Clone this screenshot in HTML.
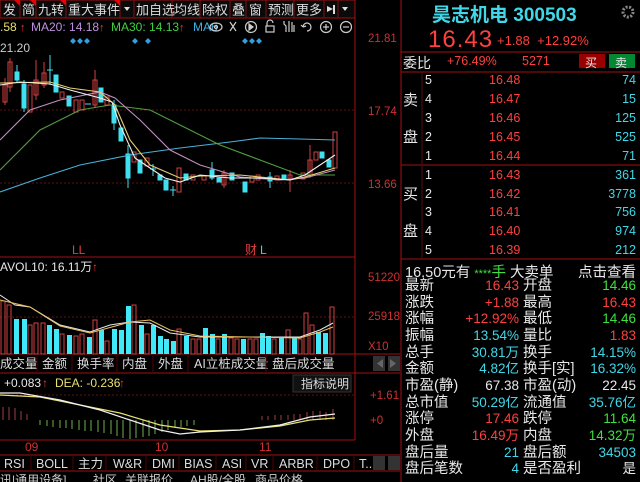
<!DOCTYPE html>
<html><head><meta charset="utf-8"><style>
body{margin:0;width:640px;height:482px;background:#000;overflow:hidden;font-family:"Liberation Sans","Noto Sans CJK SC",sans-serif;position:relative;color:#ddd}
.a{position:absolute;white-space:nowrap}
.r{color:#ff4040}.c{color:#40d8e8}.g{color:#40e040}.w{color:#e8e8e8}.y{color:#e8e070}
.rp div{position:absolute;white-space:nowrap;font-size:12.5px}
</style></head><body>
<svg width="640" height="482" style="position:absolute;left:0;top:0" font-family="Liberation Sans, Noto Sans CJK SC, sans-serif">
<rect x="0" y="0" width="355" height="18" fill="#0a0a0a" stroke="#a01010"/>
<g stroke="#801010"><line x1="20" y1="0" x2="20" y2="18"/><line x1="36" y1="0" x2="36" y2="18"/><line x1="66" y1="0" x2="66" y2="18"/><line x1="120" y1="0" x2="120" y2="18"/><line x1="134" y1="0" x2="134" y2="18"/><line x1="172" y1="0" x2="172" y2="18"/><line x1="200" y1="0" x2="200" y2="18"/><line x1="230" y1="0" x2="230" y2="18"/><line x1="246" y1="0" x2="246" y2="18"/><line x1="266" y1="0" x2="266" y2="18"/><line x1="294" y1="0" x2="294" y2="18"/><line x1="324" y1="0" x2="324" y2="18"/><line x1="338" y1="0" x2="338" y2="18"/></g>
<g fill="#e00"><path d="M14 0h6v6z"/><path d="M30 0h6v6z"/><path d="M60 0h6v6z"/><path d="M114 0h6v6z"/></g>
<path d="M124 7h6l-3 4z M342 7h6l-3 4z" fill="#ddd"/>
<path d="M327 6l6 3l-6 3z" fill="#ddd"/><rect x="333" y="5" width="2" height="9" fill="#ddd"/>
<g font-size="13" fill="#ddd"><text x="3" y="14.5">发</text><text x="22" y="14.5">简</text><text x="38" y="14.5">九转</text><text x="68" y="14.5">重大事件</text><text x="136" y="14.5">加自选</text><text x="174" y="14.5">均线</text><text x="202" y="14.5">除权</text><text x="232" y="14.5">叠</text><text x="249" y="14.5">窗</text><text x="268" y="14.5">预测</text><text x="296" y="14.5">更多</text></g>
<g font-size="12"><text x="0" y="31" fill="#e8e070">.58</text><text x="31" y="31" fill="#c090e0">MA20: 14.18</text><text x="111" y="31" fill="#40d040">MA30: 14.13</text><text x="193" y="31" fill="#40b0e0">MA6</text></g>
<g fill="#ff3030" font-size="11"><text x="20" y="31">↑</text><text x="99" y="31">↑</text><text x="179" y="31">↑</text></g>
<g stroke="#ccc" fill="none" stroke-width="1.2"><ellipse cx="216" cy="27" rx="6" ry="4"/><circle cx="216" cy="27" r="1.5"/><path d="M230 22l6 9M236 22l-6 9"/><circle cx="251" cy="27" r="5.5"/><path d="M249 24l4 3l-4 3z" fill="#ccc"/><rect x="266" y="26" width="8" height="6"/><path d="M267 26v-3a3 3 0 0 1 6 0"/><path d="M286 32v-6l-2-2v-3M289 32v-11M292 32v-10M294 32v-7"/><path d="M303 27a4 4 0 1 1 4 4M303 27l-2-2M303 27l3-1"/><circle cx="326" cy="27" r="5.5"/><path d="M323 27h6M326 24v6"/><circle cx="346" cy="27" r="5.5"/><path d="M343 27h6"/></g>
<g fill="#30a0e0"><path d="M70 41l3-3l3 3l-3 3z M77 41l3-3l3 3l-3 3z M84 41l3-3l3 3l-3 3z M132 41l3-3l3 3l-3 3z M145 41l3-3l3 3l-3 3z M242 41l3-3l3 3l-3 3z M249 41l3-3l3 3l-3 3z M256 41l3-3l3 3l-3 3z"/></g>
<text x="0" y="52" font-size="12" fill="#ccc">21.20</text>
<g stroke="#601010" stroke-dasharray="2,2"><line x1="0" y1="110" x2="355" y2="110"/><line x1="0" y1="183" x2="355" y2="183"/><line x1="0" y1="317" x2="355" y2="317"/><line x1="0" y1="395" x2="355" y2="395"/></g>
<line x1="355" y1="18" x2="355" y2="440" stroke="#a01010"/>
<line x1="0" y1="257" x2="355" y2="257" stroke="#a01010"/>
<line x1="0" y1="354" x2="400" y2="354" stroke="#a01010"/>
<line x1="0" y1="373" x2="400" y2="373" stroke="#a01010"/>
<line x1="0" y1="440" x2="355" y2="440" stroke="#a01010"/>
<line x1="0" y1="455" x2="400" y2="455" stroke="#a01010"/>
<line x1="0" y1="471" x2="400" y2="471" stroke="#a01010"/>
<g font-size="11.5" fill="#d03030"><text x="368" y="42">21.81</text><text x="368" y="115">17.74</text><text x="368" y="188">13.66</text><text x="368" y="281">51220</text><text x="368" y="320">25918</text><text x="368" y="350">X10</text><text x="370" y="399">+1.61</text><text x="370" y="424">+0</text></g>
<g transform="translate(0,40)" stroke-width="1">
<g stroke="#d04040" fill="none">
<line x1="5" y1="38" x2="5" y2="65"/><rect x="3" y="45" width="4" height="17"/>
<line x1="10" y1="18" x2="10" y2="52"/><rect x="8" y="22" width="4" height="25"/>
<rect x="28" y="45" width="4" height="27"/><rect x="34" y="40" width="4" height="15"/><line x1="36" y1="20" x2="36" y2="60"/>
<rect x="42" y="33" width="4" height="12"/><line x1="44" y1="22" x2="44" y2="48"/>
<rect x="60" y="52" width="4" height="6"/><rect x="74" y="60" width="4" height="12"/><rect x="80" y="60" width="4" height="10"/>
<rect x="93" y="40" width="4" height="25"/><line x1="95" y1="30" x2="95" y2="68"/><rect x="105" y="57" width="4" height="8"/>
<rect x="132" y="112" width="4" height="10"/><rect x="145" y="118" width="4" height="8"/><rect x="177" y="128" width="4" height="24"/>
<rect x="191" y="135" width="4" height="5"/><rect x="202" y="136" width="4" height="4"/><rect x="222" y="133" width="4" height="12"/><line x1="224" y1="130" x2="224" y2="148"/><rect x="250" y="136" width="4" height="6"/><rect x="256" y="135" width="4" height="5"/><rect x="275" y="136" width="4" height="4"/><line x1="290" y1="130" x2="290" y2="152"/><rect x="288" y="135" width="4" height="4"/><rect x="301" y="133" width="4" height="6"/>
<rect x="308" y="120" width="4" height="15"/><line x1="310" y1="105" x2="310" y2="138"/><rect x="314" y="112" width="4" height="8"/><rect x="333" y="92" width="4" height="36"/>
</g>
<g fill="#40e0f0" stroke="#40e0f0">
<rect x="15" y="32" width="4" height="8"/><line x1="17" y1="25" x2="17" y2="42"/><rect x="22" y="44" width="4" height="24"/><line x1="24" y1="40" x2="24" y2="72"/>
<line x1="47" y1="30" x2="53" y2="30"/><line x1="50" y1="15" x2="50" y2="45"/>
<rect x="54" y="35" width="4" height="17"/><rect x="67" y="56" width="4" height="10"/><line x1="85" y1="64" x2="91" y2="64"/>
<rect x="99" y="48" width="4" height="14"/><rect x="112" y="65" width="4" height="18"/><line x1="114" y1="60" x2="114" y2="90"/>
<rect x="119" y="88" width="4" height="13"/><rect x="126" y="114" width="4" height="24"/><line x1="128" y1="105" x2="128" y2="148"/>
<rect x="138" y="120" width="4" height="13"/><line x1="150" y1="129" x2="156" y2="129"/><line x1="153" y1="124" x2="153" y2="136"/>
<rect x="158" y="135" width="4" height="5"/><rect x="164" y="140" width="4" height="10"/><line x1="170" y1="150" x2="176" y2="150"/><line x1="173" y1="146" x2="173" y2="156"/>
<rect x="184" y="134" width="4" height="6"/><rect x="210" y="130" width="4" height="8"/><line x1="212" y1="122" x2="212" y2="140"/><rect x="217" y="138" width="4" height="4"/><rect x="230" y="133" width="4" height="7"/><rect x="243" y="142" width="4" height="10"/><rect x="268" y="137" width="4" height="4"/><line x1="270" y1="132" x2="270" y2="148"/><rect x="282" y="135" width="4" height="4"/><rect x="320" y="112" width="4" height="6"/><rect x="327" y="120" width="4" height="7"/>
</g>
<g fill="none" stroke-width="1.1">
<polyline stroke="#4ab0d8" points="0,152 40,138 80,125 130,115 180,108 230,102 260,98 300,99 335,100"/>
<polyline stroke="#50a040" points="0,130 40,90 80,70 110,65 150,70 180,85 220,105 260,120 300,135 335,135"/>
<polyline stroke="#c090c0" points="0,100 30,70 60,60 100,52 115,58 140,80 170,110 200,125 240,137 280,140 305,138 335,130"/>
<polyline stroke="#e8d070" points="0,43 50,42 70,48 100,52 115,65 130,100 150,125 180,138 200,136 240,135 290,140 305,137 335,128"/>
<polyline stroke="#f0f0f0" points="0,45 20,42 50,44 70,50 100,58 112,62 120,85 135,118 150,128 165,138 180,142 200,135 230,138 260,138 290,140 305,135 320,125 335,115"/>
</g></g>
<text x="72" y="254" font-size="12" fill="#e04040">LL</text><text x="245" y="254" font-size="12" fill="#e04040">财</text><text x="260" y="254" font-size="12" fill="#40d0e0">L</text>
<text x="0" y="271" font-size="12" fill="#e8e8e8">AVOL10: 16.11万</text><text x="92" y="271" font-size="12" fill="#ff3030">↑</text>
<g fill="none" stroke="#d04040">
<rect x="1" y="301" width="4" height="53"/><rect x="7" y="305" width="4" height="49"/><rect x="28" y="325" width="4" height="29"/><rect x="34" y="323" width="4" height="31"/><rect x="41" y="323" width="4" height="31"/><rect x="60" y="334" width="4" height="20"/><rect x="74" y="336" width="4" height="18"/><rect x="80" y="334" width="4" height="20"/><rect x="93" y="320" width="4" height="34"/><rect x="105" y="341" width="4" height="13"/><rect x="132" y="305" width="4" height="49"/><rect x="145" y="334" width="4" height="20"/><rect x="177" y="329" width="4" height="25"/><rect x="191" y="339" width="4" height="15"/><rect x="197" y="339" width="4" height="15"/><rect x="216" y="339" width="4" height="15"/><rect x="229" y="338" width="4" height="16"/><rect x="235" y="339" width="4" height="15"/><rect x="248" y="339" width="4" height="15"/><rect x="254" y="339" width="4" height="15"/><rect x="272" y="339" width="4" height="15"/><rect x="286" y="330" width="4" height="24"/><rect x="298" y="339" width="4" height="15"/><rect x="304" y="313" width="4" height="41"/><rect x="310" y="325" width="4" height="29"/><rect x="330" y="307" width="4" height="47"/>
</g>
<g fill="#40e8f8">
<rect x="14" y="319" width="5" height="35"/><rect x="22" y="319" width="5" height="35"/><rect x="47" y="325" width="5" height="29"/><rect x="54" y="329" width="5" height="25"/><rect x="67" y="335" width="5" height="19"/><rect x="87" y="337" width="5" height="17"/><rect x="99" y="330" width="5" height="24"/><rect x="112" y="329" width="5" height="25"/><rect x="119" y="330" width="5" height="24"/><rect x="126" y="306" width="5" height="48"/><rect x="139" y="325" width="5" height="29"/><rect x="151" y="325" width="5" height="29"/><rect x="158" y="336" width="5" height="18"/><rect x="164" y="339" width="5" height="15"/><rect x="171" y="341" width="5" height="13"/><rect x="184" y="336" width="5" height="18"/><rect x="203" y="328" width="5" height="26"/><rect x="210" y="334" width="5" height="20"/><rect x="222" y="334" width="5" height="20"/><rect x="241" y="339" width="5" height="15"/><rect x="260" y="333" width="5" height="21"/><rect x="266" y="336" width="5" height="18"/><rect x="279" y="338" width="5" height="16"/><rect x="292" y="337" width="5" height="17"/><rect x="316" y="332" width="5" height="22"/><rect x="323" y="333" width="5" height="21"/>
</g>
<g fill="none"><polyline stroke="#e8e8e8" points="0,295 15,305 30,307 60,325 90,332 110,325 130,322 150,323 170,333 200,337 300,337 320,330 333,323"/><polyline stroke="#e8c060" points="0,300 30,307 60,326 90,333 130,322 150,320 170,330 200,336 300,338 320,332 333,327"/></g>
<g font-size="12.5" fill="#ddd"><text x="0" y="368">成交量</text><text x="42" y="368">金额</text><text x="77" y="368">换手率</text><text x="122" y="368">内盘</text><text x="158" y="368">外盘</text><text x="194" y="368">AI立桩成交量</text><text x="272" y="368">盘后成交量</text></g>
<g stroke="#500" ><line x1="37" y1="356" x2="37" y2="372"/><line x1="72" y1="356" x2="72" y2="372"/><line x1="117" y1="356" x2="117" y2="372"/><line x1="153" y1="356" x2="153" y2="372"/><line x1="188" y1="356" x2="188" y2="372"/><line x1="266" y1="356" x2="266" y2="372"/></g>
<rect x="373" y="356" width="12" height="15" fill="#333"/><rect x="388" y="356" width="12" height="15" fill="#333"/>
<path d="M383 359l-6 4.5l6 4.5z M390 359l6 4.5l-6 4.5z" fill="#666"/>
<text x="4" y="387" font-size="12" fill="#e8e8e8">+0.083</text><text x="42" y="387" font-size="12" fill="#ff3030">↑</text><text x="55" y="387" font-size="12" fill="#e8e070">DEA: -0.236</text><text x="119" y="387" font-size="12" fill="#ff3030">↑</text>
<rect x="293" y="375" width="58" height="17" fill="#111" stroke="#333"/><text x="301" y="388" font-size="12" fill="#ddd">指标说明</text>
<g stroke="#a04040"><line x1="3" y1="420" x2="3" y2="407"/><line x1="9" y1="420" x2="9" y2="407"/><line x1="15" y1="420" x2="15" y2="408"/><line x1="21" y1="420" x2="21" y2="411"/><line x1="27" y1="420" x2="27" y2="414"/><line x1="262" y1="420" x2="262" y2="416"/><line x1="268" y1="420" x2="268" y2="416"/><line x1="275" y1="420" x2="275" y2="415"/><line x1="281" y1="420" x2="281" y2="415"/><line x1="288" y1="420" x2="288" y2="415"/><line x1="294" y1="420" x2="294" y2="414"/><line x1="300" y1="420" x2="300" y2="414"/><line x1="307" y1="420" x2="307" y2="412"/><line x1="313" y1="420" x2="313" y2="411"/><line x1="320" y1="420" x2="320" y2="411"/><line x1="326" y1="420" x2="326" y2="412"/><line x1="333" y1="420" x2="333" y2="409"/></g>
<g stroke="#70b050"><line x1="40" y1="420" x2="40" y2="425"/><line x1="47" y1="420" x2="47" y2="426"/><line x1="53" y1="420" x2="53" y2="427"/><line x1="60" y1="420" x2="60" y2="428"/><line x1="66" y1="420" x2="66" y2="428"/><line x1="72" y1="420" x2="72" y2="429"/><line x1="79" y1="420" x2="79" y2="430"/><line x1="85" y1="420" x2="85" y2="431"/><line x1="91" y1="420" x2="91" y2="431"/><line x1="98" y1="420" x2="98" y2="432"/><line x1="104" y1="420" x2="104" y2="433"/><line x1="111" y1="420" x2="111" y2="434"/><line x1="117" y1="420" x2="117" y2="436"/><line x1="123" y1="420" x2="123" y2="438"/><line x1="130" y1="420" x2="130" y2="439"/><line x1="136" y1="420" x2="136" y2="438"/><line x1="143" y1="420" x2="143" y2="437"/><line x1="149" y1="420" x2="149" y2="436"/><line x1="155" y1="420" x2="155" y2="434"/><line x1="162" y1="420" x2="162" y2="432"/><line x1="168" y1="420" x2="168" y2="430"/><line x1="175" y1="420" x2="175" y2="428"/><line x1="181" y1="420" x2="181" y2="427"/><line x1="187" y1="420" x2="187" y2="426"/><line x1="194" y1="420" x2="194" y2="425"/></g>
<g fill="none" stroke-width="1.2"><polyline stroke="#e8e070" points="0,395 40,397 80,405 120,413 160,425 200,431 240,430 280,426 310,420 335,418"/><polyline stroke="#f0f0f0" points="0,393 20,393 60,400 100,410 130,420 160,430 180,434 200,432 240,430 280,425 310,417 335,414"/></g>
<g font-size="12" fill="#d03030"><text x="25" y="451">09</text><text x="155" y="451">10</text><text x="259" y="451">11</text></g>
<g font-size="12.5" fill="#ddd"><text x="4" y="468">RSI</text><text x="36" y="468">BOLL</text><text x="78" y="468">主力</text><text x="113" y="468">W&amp;R</text><text x="152" y="468">DMI</text><text x="184" y="468">BIAS</text><text x="222" y="468">ASI</text><text x="251" y="468">VR</text><text x="279" y="468">ARBR</text><text x="323" y="468">DPO</text><text x="359" y="468">T..</text></g>
<g stroke="#500"><line x1="31" y1="456" x2="31" y2="470"/><line x1="73" y1="456" x2="73" y2="470"/><line x1="106" y1="456" x2="106" y2="470"/><line x1="146" y1="456" x2="146" y2="470"/><line x1="179" y1="456" x2="179" y2="470"/><line x1="216" y1="456" x2="216" y2="470"/><line x1="246" y1="456" x2="246" y2="470"/><line x1="273" y1="456" x2="273" y2="470"/><line x1="317" y1="456" x2="317" y2="470"/><line x1="354" y1="456" x2="354" y2="470"/></g>
<rect x="373" y="456" width="12" height="14" fill="#333"/><rect x="388" y="456" width="12" height="14" fill="#333"/>
<g font-size="12" fill="#ccc"><text x="0" y="484">讯|通用设备]</text><text x="93" y="484">社区</text><text x="125" y="484">关联报价</text><text x="190" y="484">AH股/全股</text><text x="255" y="484">商品价格</text></g>
<line x1="401" y1="0" x2="401" y2="482" stroke="#a01010"/>
<g stroke="#a01010"><line x1="401" y1="52" x2="640" y2="52"/><line x1="401" y1="72" x2="640" y2="72"/><line x1="401" y1="165" x2="640" y2="165"/><line x1="401" y1="259" x2="640" y2="259"/></g>
<line x1="422" y1="72" x2="422" y2="259" stroke="#501010"/>
<rect x="579" y="54" width="26" height="14" fill="#900"/><rect x="609" y="54" width="26" height="14" fill="#083"/>
<circle cx="628" cy="12" r="5" fill="none" stroke="#888" stroke-width="3" stroke-dasharray="2,1.5"/>
</svg>
<div class="rp">
<div class="c" style="left:432px;top:0px;font-size:19px;font-weight:bold">昊志机电 300503</div>
<div class="r" style="left:428px;top:26px;font-size:24px;letter-spacing:1px">16.43</div>
<div class="r" style="left:497px;top:33px;font-size:13px">+1.88&nbsp;&nbsp;+12.92%</div>
<div class="w" style="left:403px;top:53px;font-size:14px">委比</div>
<div class="r" style="left:447px;top:54px">+76.49%</div>
<div class="r" style="left:522px;top:54px">5271</div>
<div class="w" style="left:585px;top:54px;font-size:12px">买</div><div class="w" style="left:615px;top:54px;font-size:12px">卖</div>
</div>
<div class="rp" style="font-size:13px">
<div class="w" style="left:403px;top:89px;font-size:15px">卖</div><div class="w" style="left:403px;top:126px;font-size:15px">盘</div>
<div class="w" style="left:403px;top:183px;font-size:15px">买</div><div class="w" style="left:403px;top:220px;font-size:15px">盘</div>
<div class="w" style="left:425px;top:73px">5</div><div class="r" style="left:489px;top:73px">16.48</div><div class="c" style="right:4px;top:73px">74</div>
<div class="w" style="left:425px;top:92px">4</div><div class="r" style="left:489px;top:92px">16.47</div><div class="c" style="right:4px;top:92px">15</div>
<div class="w" style="left:425px;top:111px">3</div><div class="r" style="left:489px;top:111px">16.46</div><div class="c" style="right:4px;top:111px">125</div>
<div class="w" style="left:425px;top:130px">2</div><div class="r" style="left:489px;top:130px">16.45</div><div class="c" style="right:4px;top:130px">525</div>
<div class="w" style="left:425px;top:149px">1</div><div class="r" style="left:489px;top:149px">16.44</div><div class="c" style="right:4px;top:149px">71</div>
<div class="w" style="left:425px;top:168px">1</div><div class="r" style="left:489px;top:168px">16.43</div><div class="c" style="right:4px;top:168px">361</div>
<div class="w" style="left:425px;top:187px">2</div><div class="r" style="left:489px;top:187px">16.42</div><div class="c" style="right:4px;top:187px">3778</div>
<div class="w" style="left:425px;top:205px">3</div><div class="r" style="left:489px;top:205px">16.41</div><div class="c" style="right:4px;top:205px">756</div>
<div class="w" style="left:425px;top:224px">4</div><div class="r" style="left:489px;top:224px">16.40</div><div class="c" style="right:4px;top:224px">974</div>
<div class="w" style="left:425px;top:243px">5</div><div class="r" style="left:489px;top:243px">16.39</div><div class="c" style="right:4px;top:243px">212</div>
</div>
<div class="rp">
<div class="w" style="left:405px;top:261px;font-size:14.5px">16.50元有 <span class="g" style="font-size:11px">****</span><span class="g">手</span> 大卖单</div>
<div class="w" style="right:4px;top:261px;font-size:14.5px">点击查看</div>
</div>
<div class="rp">
<div class="w" style="left:405px;top:278px;line-height:16.65px;font-size:14.5px">最新<br>涨跌<br>涨幅<br>振幅<br>总手<br>金额<br>市盈(静)<br>总市值<br>涨停<br>外盘<br>盘后量<br>盘后笔数</div>
<div style="right:121px;top:278px;line-height:16.65px;text-align:right;font-size:13.5px"><span class="r">16.43</span><br><span class="r">+1.88</span><br><span class="r">+12.92%</span><br><span class="c">13.54%</span><br><span class="c">30.81万</span><br><span class="c">4.82亿</span><br><span class="w">67.38</span><br><span class="c">50.29亿</span><br><span class="r">17.46</span><br><span class="r">16.49万</span><br><span class="c">21</span><br><span class="c">4</span></div>
<div class="w" style="left:523px;top:278px;line-height:16.65px;font-size:14.5px">开盘<br>最高<br>最低<br>量比<br>换手<br>换手[实]<br>市盈(动)<br>流通值<br>跌停<br>内盘<br>盘后额<br>是否盈利</div>
<div style="right:4px;top:278px;line-height:16.65px;text-align:right;font-size:13.5px"><span class="g">14.46</span><br><span class="r">16.43</span><br><span class="g">14.46</span><br><span class="r">1.83</span><br><span class="c">14.15%</span><br><span class="c">16.32%</span><br><span class="w">22.45</span><br><span class="c">35.76亿</span><br><span class="g">11.64</span><br><span class="g">14.32万</span><br><span class="c">34503</span><br><span class="w">是</span></div>
</div>
</body></html>
